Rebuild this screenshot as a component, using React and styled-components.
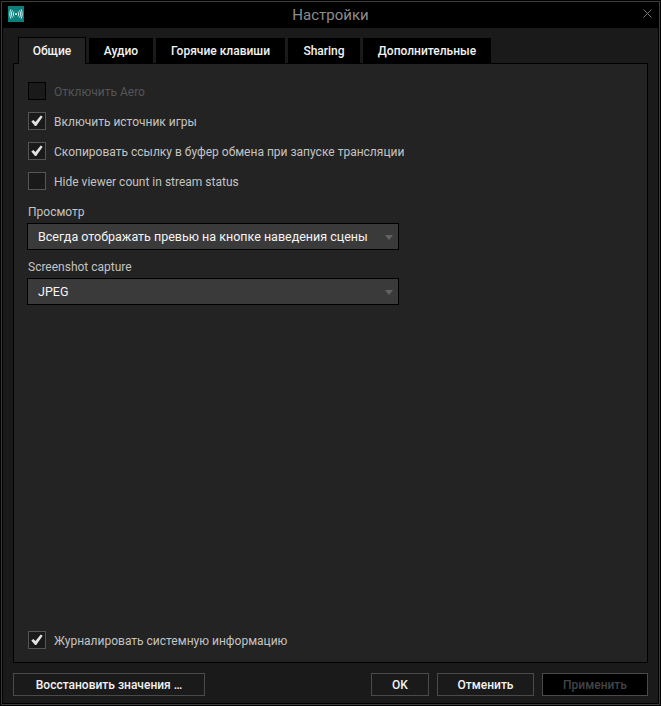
import React from "react";
import styled, { createGlobalStyle } from "styled-components";

const Global = createGlobalStyle`
  html, body { margin: 0; padding: 0; background: #000; }
  * { box-sizing: border-box; }
`;

const Frame = styled.div`
  width: 661px;
  height: 706px;
  background: #000;
  padding: 1px;
  font-family: Roboto, "Liberation Sans", sans-serif;
  font-size: 12px;
`;
const Inner = styled.div`
  height: 100%;
  border: 1px solid #3c3c3c;
  background: #000;
  display: flex;
  flex-direction: column;
`;
const TitleBar = styled.div`
  height: 26px;
  flex: none;
  display: grid;
  grid-template-columns: 1fr auto 1fr;
  align-items: center;
  padding: 0 6px;
`;
const LogoSlot = styled.div`
  display: flex;
  margin-top: -2px;
`;
const Title = styled.div`
  font-size: 15px;
  color: #8d8d8d;
`;
const Close = styled.div`
  justify-self: end;
  display: flex;
  margin-right: 1px;
  margin-top: -3px;
`;
const Body = styled.div`
  flex: 1;
  background: #1a1a1a;
  margin: 0 1px 1px 1px;
  padding: 9px 10px 5px 10px;
  display: flex;
  flex-direction: column;
`;
const Tabs = styled.div`
  display: flex;
  align-items: flex-end;
  gap: 3px;
  padding-left: 5px;
  height: 26px;
  flex: none;
`;
const Tab = styled.div`
  height: ${p => (p.$active ? "27px" : "25px")};
  margin-bottom: ${p => (p.$active ? "-1px" : "0")};
  background: ${p => (p.$active ? "#232323" : "#000")};
  color: #f2f2f2;
  font-weight: 500;
  width: ${p => p.$w}px;
  display: flex;
  align-items: center;
  justify-content: center;
  position: relative;
  z-index: ${p => (p.$active ? 1 : 0)};
  ${p => p.$active && "border: 1px solid #000; border-bottom: none;"}
`;
const Panel = styled.div`
  height: 600px;
  flex: none;
  background: #232323;
  border: 1px solid #000;
  padding: 18px 14px 13px 14px;
  display: flex;
  flex-direction: column;
`;
const Check = styled.label`
  display: flex;
  align-items: center;
  gap: 8px;
  height: 18px;
  color: ${p => (p.$disabled ? "#555" : "#c3c3c3")};
  margin-bottom: ${p => p.$mb ?? 12}px;
`;
const Box = styled.span`
  width: 18px;
  height: 18px;
  border: 1px solid ${p => (p.$disabled ? "#000" : "#555")};
  background: #1a1a1a;
  display: flex;
  align-items: center;
  justify-content: center;
  flex: none;
`;
const CheckText = styled.span`
  padding-top: 2px;
`;
const Label = styled.div`
  color: #c3c3c3;
  height: 14px;
  line-height: 14px;
  margin-bottom: 4px;
`;
const Select = styled.div`
  width: 372px;
  height: 27px;
  margin-left: -1px;
  background: #3a3a3a;
  border: 1px solid #000;
  color: #f5f5f5;
  font-size: 12.5px;
  font-weight: 400;
  display: flex;
  align-items: center;
  justify-content: space-between;
  padding: 0 5px 0 10px;
  margin-bottom: ${p => p.$mb ?? 10}px;
`;
const Arrow = styled.span`
  width: 0;
  height: 0;
  border-left: 4px solid transparent;
  border-right: 4px solid transparent;
  border-top: 5px solid #626262;
  margin-top: 1px;
`;
const Spacer = styled.div`
  flex: 1;
`;
const Footer = styled.div`
  display: flex;
  align-items: center;
  margin-top: 10px;
  height: 23px;
  flex: none;
`;
const Button = styled.div`
  height: 23px;
  width: ${p => p.$w}px;
  margin-left: ${p => p.$ml ?? 0}px;
  border: 1px solid #4a4a4a;
  background: ${p => (p.$disabled ? "#000" : "#1a1a1a")};
  color: ${p => (p.$disabled ? "#444" : "#f2f2f2")};
  font-weight: 500;
  display: flex;
  align-items: center;
  justify-content: center;
`;

const Tick = () => (
  <svg width="12" height="12" viewBox="0 0 12 12">
    <path d="M0.3 6.6 L2.4 5 L4.4 7 L9.8 0.6 L11.7 1.8 L5.2 11 L4 11 Z" fill="#e2e2e2" />
  </svg>
);

const Logo = () => (
  <svg width="16" height="16" viewBox="0 0 16 16" fill="none">
    <rect width="16" height="16" fill="#0b7f7c" />
    <circle cx="8" cy="8" r="1" fill="#e6f7f6" />
    <g stroke="#d6f1f0" strokeWidth="1" fill="none">
      <path d="M6 5.6 C5.2 7 5.2 9 6 10.4" />
      <path d="M4.4 4.4 C3.2 6.5 3.2 9.5 4.4 11.6" />
      <path d="M2.8 3.4 C1.5 6 1.5 10 2.8 12.6" />
      <path d="M10 5.6 C10.8 7 10.8 9 10 10.4" />
      <path d="M11.6 4.4 C12.8 6.5 12.8 9.5 11.6 11.6" />
      <path d="M13.2 3.4 C14.5 6 14.5 10 13.2 12.6" />
    </g>
  </svg>
);

const Option = ({ checked, disabled, mb, children }) => (
  <Check $disabled={disabled} $mb={mb}>
    <Box $disabled={disabled}>{checked && <Tick />}</Box>
    <CheckText>{children}</CheckText>
  </Check>
);

export default function App() {
  return (
    <Frame>
      <Global />
      <Inner>
        <TitleBar>
          <LogoSlot><Logo /></LogoSlot>
          <Title>Настройки</Title>
          <Close>
            <svg width="9" height="9" viewBox="0 0 9 9" stroke="#777" strokeWidth="1" fill="none">
              <path d="M0.5 0.5 L8.5 8.5 M8.5 0.5 L0.5 8.5" />
            </svg>
          </Close>
        </TitleBar>
        <Body>
          <Tabs>
            <Tab $active $w={68}>Общие</Tab>
            <Tab $w={64}>Аудио</Tab>
            <Tab $w={129}>Горячие клавиши</Tab>
            <Tab $w={72}>Sharing</Tab>
            <Tab $w={128}>Дополнительные</Tab>
          </Tabs>
          <Panel>
            <Option disabled>Отключить Aero</Option>
            <Option checked>Включить источник игры</Option>
            <Option checked>Скопировать ссылку в буфер обмена при запуске трансляции</Option>
            <Option mb={15}>Hide viewer count in stream status</Option>
            <Label>Просмотр</Label>
            <Select>
              Всегда отображать превью на кнопке наведения сцены
              <Arrow />
            </Select>
            <Label>Screenshot capture</Label>
            <Select $mb={0}>
              JPEG
              <Arrow />
            </Select>
            <Spacer />
            <Option checked mb={0}>Журналировать системную информацию</Option>
          </Panel>
          <Footer>
            <Button $w={192}>Восстановить значения …</Button>
            <Spacer />
            <Button $w={58}>OK</Button>
            <Button $w={97} $ml={8}>Отменить</Button>
            <Button $w={106} $ml={8} $disabled>Применить</Button>
          </Footer>
        </Body>
      </Inner>
    </Frame>
  );
}
